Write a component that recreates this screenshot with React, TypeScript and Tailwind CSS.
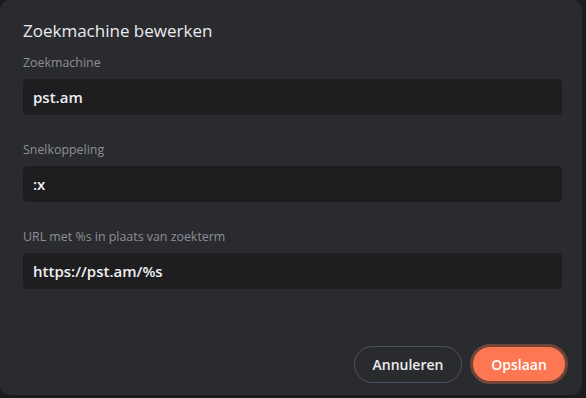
export default function App() {
  const fields = [
    { label: "Zoekmachine", value: "pst.am" },
    { label: "Snelkoppeling", value: ":x" },
    { label: "URL met %s in plaats van zoekterm", value: "https://pst.am/%s" },
  ];

  return (
    <div className="w-[586px] h-[398px] bg-[#1b1c1e] font-['Open_Sans','Noto_Sans',sans-serif]">
      <div className="w-[582px] h-[395px] rounded-[10px] bg-[#2a2b2f] px-[23px] pt-[19px] flex flex-col">
        <h2 className="text-[17px] leading-[24px] text-[#ececee] font-medium">Zoekmachine bewerken</h2>

        <div className="mt-[12px] flex flex-col gap-[27px]">
          {fields.map((f) => (
            <div key={f.label} className="flex flex-col">
              <label className="text-[12.4px] leading-[16px] text-[#8e8f94]">{f.label}</label>
              <div className="mt-[8px] h-[36px] w-[539px] rounded-[4px] bg-[#1e1e21] px-[10px] flex items-center text-[15px] font-semibold text-[#f1f1f3]">
                {f.value}
              </div>
            </div>
          ))}
        </div>

        <div className="mt-auto mb-[11px] flex justify-end items-center gap-[8px]">
          <button className="h-[37px] w-[108px] rounded-full border border-[#4f5066] text-[14px] font-semibold text-[#ececee]">
            Annuleren
          </button>
          <button className="h-[40px] w-[98px] rounded-full border-[3px] border-[#6e4536] bg-[#fc7752] text-[14px] font-semibold text-white -mr-[9px]">
            Opslaan
          </button>
        </div>
      </div>
    </div>
  );
}
